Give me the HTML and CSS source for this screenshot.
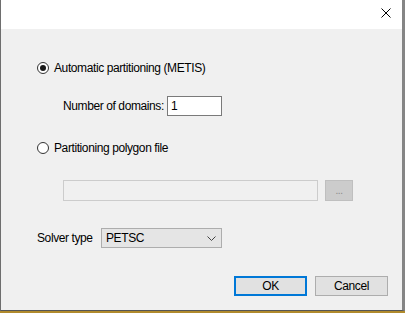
FILE: index.html
```html
<!DOCTYPE html>
<html lang="en">
<head>
    <meta charset="UTF-8">
    <title>Partitioning</title>
    <link rel="stylesheet" href="styles.css">
</head>
<body>
    <div class="window">
        <div class="titlebar">
            <span class="close">
                <svg width="10" height="10" viewBox="0 0 10 10"><path d="M0.5 0.5L9.5 9.5M9.5 0.5L0.5 9.5" stroke="#000" stroke-width="1"/></svg>
            </span>
        </div>
        <div class="content">
            <label class="option first">
                <span class="radio checked"></span>
                <span>Automatic partitioning (METIS)</span>
            </label>
            <div class="domains">
                <span class="label">Number of domains:</span>
                <span class="textbox">1</span>
            </div>
            <label class="option second">
                <span class="radio"></span>
                <span>Partitioning polygon file</span>
            </label>
            <div class="file-row">
                <span class="textbox disabled"></span>
                <span class="browse">...</span>
            </div>
            <div class="solver">
                <span class="label">Solver type</span>
                <span class="select">
                    <span>PETSC</span>
                    <svg width="9" height="5" viewBox="0 0 9 5"><path d="M0.5 0.5L4.5 4.5L8.5 0.5" fill="none" stroke="#444" stroke-width="1"/></svg>
                </span>
            </div>
            <div class="buttons">
                <span class="button default">OK</span>
                <span class="button">Cancel</span>
            </div>
        </div>
    </div>
</body>
</html>
```

FILE: styles.css
```css
body {
    margin: 0;
    background-color: #b08a2c;
    font-family: 'Liberation Sans', Arial, sans-serif;
    font-size: 12px;
    letter-spacing: -0.4px;
    color: #000;
}
.window {
    width: 401px;
    height: 310px;
    border-left: 1px solid #6e6e6e;
    border-right: 3px solid #858585;
    border-bottom: 1px solid #555;
    background-color: #f0f0f0;
    display: flex;
    flex-direction: column;
}
.titlebar {
    height: 29px;
    background-color: #fff;
    display: flex;
    justify-content: flex-end;
    align-items: flex-start;
}
.close {
    width: 10px;
    height: 10px;
    margin: 8px 11px 0 0;
    display: flex;
}
.content {
    flex: 1;
    padding: 0 14px 0 35px;
    display: flex;
    flex-direction: column;
    white-space: nowrap;
}
.option {
    height: 16px;
    display: flex;
    align-items: center;
    gap: 5px;
}
.option.first {
    margin-top: 31px;
}
.option.second {
    margin-top: 24px;
}
.radio {
    flex-shrink: 0;
    width: 10px;
    height: 10px;
    margin-left: 1px;
    border: 1px solid #333;
    border-radius: 50%;
    background-color: #fff;
    display: flex;
    justify-content: center;
    align-items: center;
}
.radio.checked::after {
    content: '';
    width: 6px;
    height: 6px;
    border-radius: 50%;
    background-color: #1a1a1a;
}
.domains {
    margin: 20px 0 0 27px;
    height: 20px;
    display: flex;
    align-items: center;
}
.domains .label {
    flex-shrink: 0;
    width: 104px;
}
.textbox {
    box-sizing: border-box;
    flex-shrink: 0;
    width: 55px;
    height: 20px;
    border: 1px solid #7a7a7a;
    background-color: #fff;
    padding: 0 3px;
    display: flex;
    align-items: center;
}
.file-row {
    margin: 24px 0 0 27px;
    height: 21px;
    display: flex;
    gap: 7px;
}
.textbox.disabled {
    width: 255px;
    height: 21px;
    border-color: #cccccc;
    background-color: #f0f0f0;
}
.browse {
    box-sizing: border-box;
    flex-shrink: 0;
    width: 28px;
    height: 21px;
    border: 1px solid #bfbfbf;
    background-color: #cccccc;
    color: #8a8a8a;
    font-size: 10px;
    display: flex;
    justify-content: center;
    align-items: flex-end;
    padding-bottom: 4px;
}
.solver {
    margin-top: 27px;
    height: 20px;
    display: flex;
    align-items: center;
}
.solver .label {
    flex-shrink: 0;
    width: 64px;
    padding-left: 1px;
}
.select {
    box-sizing: border-box;
    width: 121px;
    height: 20px;
    border: 1px solid #adadad;
    background-color: #e5e5e5;
    padding: 0 5px 0 4px;
    display: flex;
    justify-content: space-between;
    align-items: center;
}
.buttons {
    margin-top: 28px;
    display: flex;
    justify-content: flex-end;
    gap: 8px;
}
.button {
    box-sizing: border-box;
    width: 73px;
    height: 20px;
    border: 1px solid #adadad;
    background-color: #e1e1e1;
    display: flex;
    justify-content: center;
    align-items: center;
}
.button.default {
    border: 2px solid #0078d7;
}
```
